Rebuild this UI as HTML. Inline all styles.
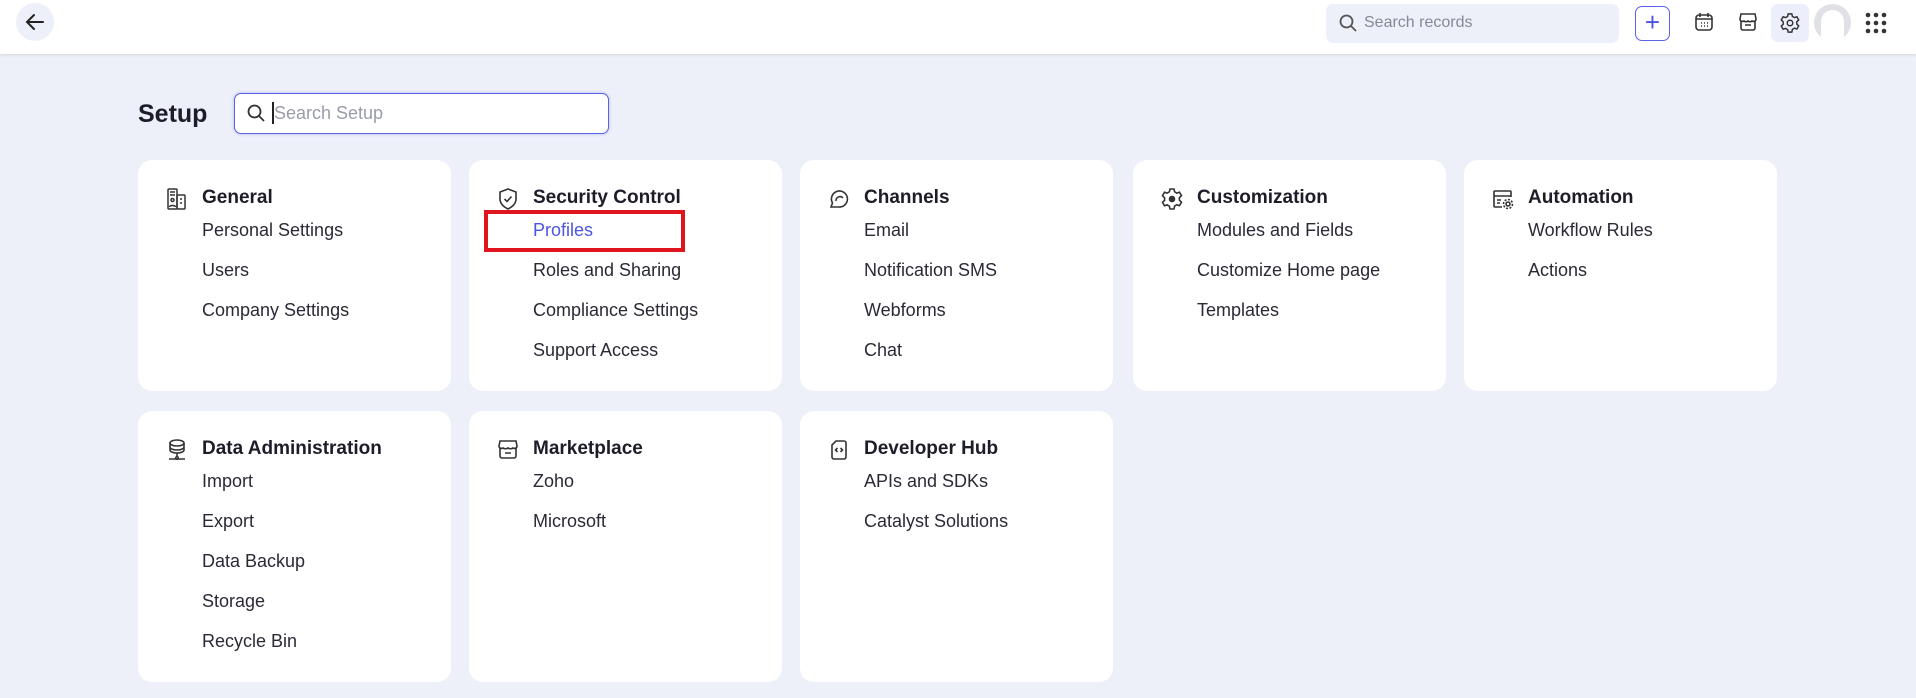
<!DOCTYPE html>
<html><head><meta charset="utf-8"><style>
*{box-sizing:border-box;margin:0;padding:0}
body{width:1916px;height:698px;background:#eef0f9;font-family:"Liberation Sans",sans-serif;position:relative;overflow:hidden;color:#1d1d29}
.hdr{position:absolute;left:0;top:0;width:1916px;height:54px;background:#fff;box-shadow:0 1px 3px rgba(0,0,0,.12)}
.abs{position:absolute}
.card{position:absolute;background:#fff;border-radius:14px;width:313px}
.card .t{position:absolute;left:64px;top:27px;font-size:19px;font-weight:bold;color:#1d1d29}
.card .ic{position:absolute;left:27px;top:27px;width:24px;height:24px}
.card .i{position:absolute;left:64px;font-size:18px;color:#2a2a36}
</style></head><body>
<div class="hdr">
 <div class="abs" style="left:16px;top:3px;width:38px;height:38px;border-radius:50%;background:#eef0f9"></div>
 <svg class="abs" style="left:23px;top:10px" width="24" height="24" viewBox="0 0 24 24" fill="none" stroke="#222" stroke-width="2" stroke-linecap="round"><path d="M20 12H4M11 5l-7 7 7 7"/></svg>
 <div class="abs" style="left:1326px;top:4px;width:293px;height:39px;border-radius:7px;background:#eef0f9"></div>
 <svg class="abs" style="left:1338px;top:13px" width="20" height="20" viewBox="0 0 20 20" fill="none" stroke="#555" stroke-width="1.8"><circle cx="8.5" cy="8.5" r="6"/><path d="M13 13l5 5"/></svg>
 <div class="abs" style="left:1364px;top:14px;font-size:16px;color:#858897">Search records</div>
 <div class="abs" style="left:1635px;top:6px;width:35px;height:35px;border:1.5px solid #5a62e8;border-radius:7px;color:#4a52e0;font-size:26px;line-height:30px;text-align:center">+</div>
 <svg class="abs" style="left:1693px;top:11px" width="22" height="22" viewBox="0 0 22 22" fill="none" stroke="#333" stroke-width="1.6"><rect x="3" y="4" width="16" height="15" rx="3"/><path d="M3 8h16M7 2v4M15 2v4M8 12h1M11 12h1M14 12h1M8 15h1M11 15h1M14 15h1"/></svg>
 <svg class="abs" style="left:1737px;top:11px" width="22" height="22" viewBox="0 0 22 22" fill="none" stroke="#333" stroke-width="1.6"><path d="M4 3h14l1 5c0 2-2 3-4 2-1 1-3 1-4 0-1 1-3 1-4 0-2 1-4 0-4-2z"/><path d="M4 10v7a2 2 0 002 2h10a2 2 0 002-2v-7M8 14h6"/></svg>
 <div class="abs" style="left:1771px;top:4px;width:38px;height:38px;border-radius:7px;background:#eceefb"></div>
 <svg class="abs" style="left:1779px;top:12px" width="22" height="22" viewBox="0 0 24 24" fill="none" stroke="#333" stroke-width="1.6"><circle cx="12" cy="12" r="3"/><path d="M10 2h4l.6 2.8 2.2 1.3 2.7-.9 2 3.5-2.1 1.9v2.6l2.1 1.9-2 3.5-2.7-.9-2.2 1.3L14 22h-4l-.6-2.8-2.2-1.3-2.7.9-2-3.5 2.1-1.9v-2.6L2.5 8.7l2-3.5 2.7.9 2.2-1.3z"/></svg>
 <div class="abs" style="left:1814px;top:4px;width:37px;height:37px;border-radius:50%;background:#dfe1e6"></div>
 <div class="abs" style="left:1821px;top:10px;width:23px;height:31px;border-radius:12px 12px 0 0;background:#fff"></div>
 <svg class="abs" style="left:1865px;top:12px" width="22" height="22" viewBox="0 0 22 22" fill="#333"><circle cx="3" cy="3" r="2.3"/><circle cx="11" cy="3" r="2.3"/><circle cx="19" cy="3" r="2.3"/><circle cx="3" cy="11" r="2.3"/><circle cx="11" cy="11" r="2.3"/><circle cx="19" cy="11" r="2.3"/><circle cx="3" cy="19" r="2.3"/><circle cx="11" cy="19" r="2.3"/><circle cx="19" cy="19" r="2.3"/></svg>
</div>
<div class="abs" style="left:138px;top:100px;font-size:25px;font-weight:bold;color:#1d1d29">Setup</div>
<div class="abs" style="left:234px;top:93px;width:375px;height:41px;border:1.5px solid #5a62e8;border-radius:7px;background:#fff;box-shadow:0 0 3px rgba(90,98,232,.4)"></div>
<svg class="abs" style="left:246px;top:103px" width="20" height="20" viewBox="0 0 20 20" fill="none" stroke="#333" stroke-width="1.8"><circle cx="8.5" cy="8.5" r="6"/><path d="M13 13l5 5"/></svg>
<div class="abs" style="left:272px;top:102px;width:1.5px;height:22px;background:#222"></div>
<div class="abs" style="left:274px;top:103px;font-size:18px;color:#9a9cab">Search Setup</div>

<div class="card" style="left:138px;top:160px;height:231px">
 <svg class="ic" viewBox="0 0 24 24" fill="none" stroke="#333" stroke-width="1.5"><rect x="3" y="2" width="9" height="20" rx="1"/><rect x="12" y="8" width="8" height="14" rx="1"/><path d="M5 5h5M5 8h5M15 12h2M15 16h2"/><circle cx="7.5" cy="13" r="1.5"/><path d="M4.5 20c0-2 6-2 6 0"/></svg>
 <div class="t">General</div>
 <div class="i" style="top:60px">Personal Settings</div>
 <div class="i" style="top:100px">Users</div>
 <div class="i" style="top:140px">Company Settings</div>
</div>
<div class="card" style="left:469px;top:160px;height:231px">
 <svg class="ic" viewBox="0 0 24 24" fill="none" stroke="#333" stroke-width="1.6"><path d="M12 2l8 3v7c0 5-4 8-8 10-4-2-8-5-8-10V5z"/><path d="M8.5 12l2.5 2.5 4.5-5"/></svg>
 <div class="t">Security Control</div>
 <div class="i" style="top:60px;color:#4c55e2">Profiles</div>
 <div class="i" style="top:100px">Roles and Sharing</div>
 <div class="i" style="top:140px">Compliance Settings</div>
 <div class="i" style="top:180px">Support Access</div>
</div>
<div class="abs" style="left:484px;top:210px;width:201px;height:42px;border:4px solid #e0141c"></div>
<div class="card" style="left:800px;top:160px;height:231px">
 <svg class="ic" viewBox="0 0 24 24" fill="none" stroke="#333" stroke-width="1.6"><path d="M4 20l1.5-4A8 8 0 1112 20H4z"/><path d="M9 14a4 4 0 017-3"/></svg>
 <div class="t">Channels</div>
 <div class="i" style="top:60px">Email</div>
 <div class="i" style="top:100px">Notification SMS</div>
 <div class="i" style="top:140px">Webforms</div>
 <div class="i" style="top:180px">Chat</div>
</div>
<div class="card" style="left:1133px;top:160px;height:231px">
 <svg class="ic" viewBox="0 0 24 24" fill="none" stroke="#333" stroke-width="1.6"><circle cx="12" cy="12" r="2.5" fill="#333"/><path d="M10 2h4l.6 2.8 2.2 1.3 2.7-.9 2 3.5-2.1 1.9v2.6l2.1 1.9-2 3.5-2.7-.9-2.2 1.3L14 22h-4l-.6-2.8-2.2-1.3-2.7.9-2-3.5 2.1-1.9v-2.6L2.5 8.7l2-3.5 2.7.9 2.2-1.3z"/></svg>
 <div class="t">Customization</div>
 <div class="i" style="top:60px">Modules and Fields</div>
 <div class="i" style="top:100px">Customize Home page</div>
 <div class="i" style="top:140px">Templates</div>
</div>
<div class="card" style="left:1464px;top:160px;height:231px">
 <svg class="ic" viewBox="0 0 24 24" fill="none" stroke="#333" stroke-width="1.6"><path d="M11 20H4a1 1 0 01-1-1V5a1 1 0 011-1h15a1 1 0 011 1v5M3 9h17M6 13h4M6 16h3"/><circle cx="17" cy="17" r="2"/><circle cx="17" cy="17" r="4.5" stroke-dasharray="2 1.5"/></svg>
 <div class="t">Automation</div>
 <div class="i" style="top:60px">Workflow Rules</div>
 <div class="i" style="top:100px">Actions</div>
</div>
<div class="card" style="left:138px;top:411px;height:271px">
 <svg class="ic" viewBox="0 0 24 24" fill="none" stroke="#333" stroke-width="1.6"><ellipse cx="12" cy="5" rx="7" ry="3"/><path d="M5 5v7c0 1.7 3 3 7 3s7-1.3 7-3V5M5 9c0 1.7 3 3 7 3s7-1.3 7-3M12 15v4M4 21h16"/><circle cx="12" cy="20" r="1.3"/></svg>
 <div class="t">Data Administration</div>
 <div class="i" style="top:60px">Import</div>
 <div class="i" style="top:100px">Export</div>
 <div class="i" style="top:140px">Data Backup</div>
 <div class="i" style="top:180px">Storage</div>
 <div class="i" style="top:220px">Recycle Bin</div>
</div>
<div class="card" style="left:469px;top:411px;height:271px">
 <svg class="ic" viewBox="0 0 24 24" fill="none" stroke="#333" stroke-width="1.6"><path d="M4 3h16l1 5c0 2-2 3-4 2-1 1-4 1-5 0-1 1-4 1-5 0-2 1-4 0-4-2z"/><path d="M4 10v8a2 2 0 002 2h12a2 2 0 002-2v-8M9 15h6"/></svg>
 <div class="t">Marketplace</div>
 <div class="i" style="top:60px">Zoho</div>
 <div class="i" style="top:100px">Microsoft</div>
</div>
<div class="card" style="left:800px;top:411px;height:271px">
 <svg class="ic" viewBox="0 0 24 24" fill="none" stroke="#333" stroke-width="1.6"><path d="M9 3h8a2 2 0 012 2v14a2 2 0 01-2 2H7a2 2 0 01-2-2V7z"/><path d="M10.5 10l-2 2 2 2M13.5 10l2 2-2 2"/></svg>
 <div class="t">Developer Hub</div>
 <div class="i" style="top:60px">APIs and SDKs</div>
 <div class="i" style="top:100px">Catalyst Solutions</div>
</div>
</body></html>
